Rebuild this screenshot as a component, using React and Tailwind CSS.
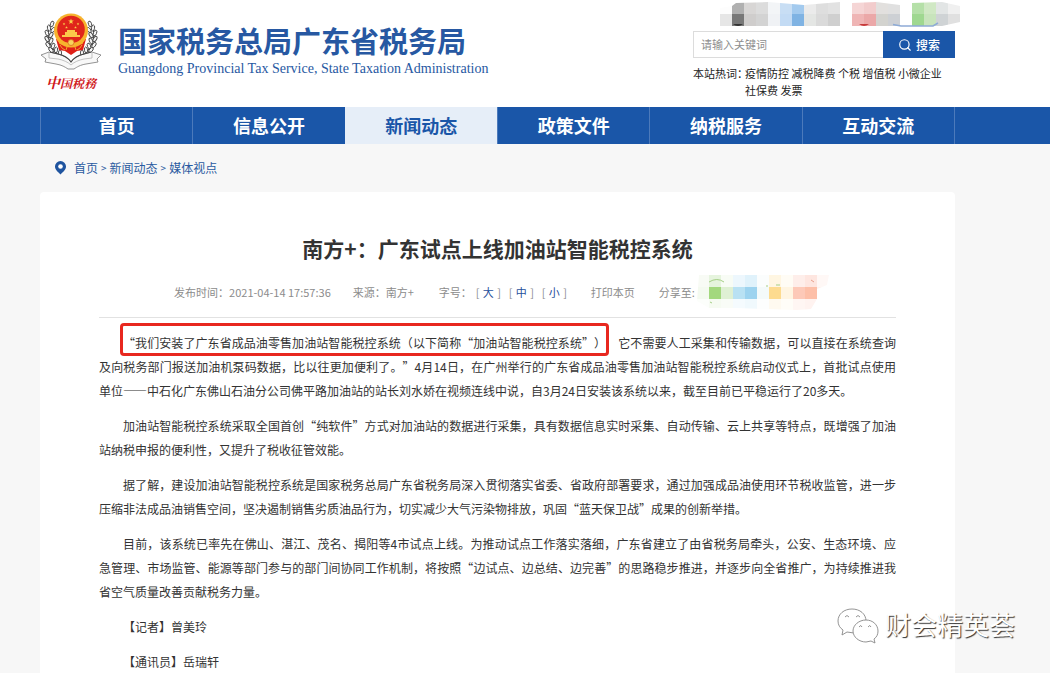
import React, { useState } from 'react';
import { Search } from 'lucide-react';

const navItems = [
  { id: 'home', label: '首页' },
  { id: 'open', label: '信息公开' },
  { id: 'news', label: '新闻动态' },
  { id: 'policy', label: '政策文件' },
  { id: 'service', label: '纳税服务' },
  { id: 'interact', label: '互动交流' }
];

const hotWords = ['疫情防控', '减税降费', '个税', '增值税', '小微企业', '社保费', '发票'];

const fontSizes = ['大', '中', '小'];

const paragraphs = [
  '加油站智能税控系统采取全国首创“纯软件”方式对加油站的数据进行采集，具有数据信息实时采集、自动传输、云上共享等特点，既增强了加油站纳税申报的便利性，又提升了税收征管效能。',
  '据了解，建设加油站智能税控系统是国家税务总局广东省税务局深入贯彻落实省委、省政府部署要求，通过加强成品油使用环节税收监管，进一步压缩非法成品油销售空间，坚决遏制销售劣质油品行为，切实减少大气污染物排放，巩固“蓝天保卫战”成果的创新举措。',
  '目前，该系统已率先在佛山、湛江、茂名、揭阳等4市试点上线。为推动试点工作落实落细，广东省建立了由省税务局牵头，公安、生态环境、应急管理、市场监管、能源等部门参与的部门间协同工作机制，将按照“边试点、边总结、边完善”的思路稳步推进，并逐步向全省推广，为持续推进我省空气质量改善贡献税务力量。',
  '【记者】曾美玲',
  '【通讯员】岳瑞轩'
];

const toolMosaic = [
  ['#fdfdfd', '#b0b0b0', '#d8d6d5', '#dcdcdc', '#f3f5f7', '#c8def4', '#a3caee', '#ebebeb', '#dedede', '#e2e2e2', '#ffffff', '#f5d5d5', '#f2cccc', '#e2e0de', '#e0e0e0', '#ffffff', '#b5e0a8', '#d0e8c4', '#e2e5e5', '#f0f0f0'],
  ['#e6e6e6', '#787878', '#cfcdcc', '#d3d3d3', '#f0f2f5', '#c3dbf4', '#7fb3e3', '#e4e6e4', '#dadada', '#cfcfcf', '#ffffff', '#efb5b5', '#eba8a8', '#d3d3cf', '#cdd0d4', '#fafafa', '#9fd890', '#c8e4bc', '#cfd3d5', '#e0e0e0']
];

const shareMosaic = [
  ['#f8fbf5', '#e6f4de', '#f8fcf5', '#edf7fd', '#e0f2fb', '#fbfdfd', '#fff6e2', '#fffcf5', '#feeeea', '#fee6e0', '#fff8f6'],
  ['#f4faf0', '#a3d87e', '#dff0d4', '#b9e1f3', '#9dd3ef', '#f4fafa', '#fddb8f', '#fff5e2', '#fdc9b8', '#fdbfa8', '#fef2ee'],
  ['#fcfefb', '#f6fbf2', '#f9fcf7', '#f5fbfe', '#f0f9fd', '#fdfefe', '#fffaf0', '#fffdf8', '#fff6f3', '#fff3f0', '#ffffff']
];

const Mosaic = ({ rows, className, clip, id, children }) => (
  <svg className={className} viewBox={`0 0 ${rows[0].length * 12} ${rows.length * 12}`} aria-hidden="true">
    <clipPath id={id}>
      <path d={clip} />
    </clipPath>
    <g clipPath={`url(#${id})`} shapeRendering="crispEdges">
      {rows.map((row, y) => row.map((fill, x) => (
        <rect key={`${x}-${y}`} x={x * 12} y={y * 12} width="12" height="12" fill={fill} />
      )))}
    </g>
    {children}
  </svg>
);

const Star = ({ x, y, r }) => (
  <path
    transform={`translate(${x} ${y}) scale(${r})`}
    d="M0-1 .24-.32.95-.31.38.12.59.81 0 .4-.59.81-.38.12-.95-.31-.24-.32Z"
    fill="#fbd34a"
  />
);

// x, y, tilt of every grain on the left ear
const wheat = [
  [12, 12, 20], [9, 16, -10], [13, 18, 35], [7, 21, -20], [11, 23, 30], [7, 27, -30], [11, 29, 25],
  [8, 33, -35], [13, 34, 20], [11, 38, -40], [16, 38, 10], [15, 42, -50], [20, 41, 0], [20, 45, -60]
];

const Emblem = () => (
  <svg className="block h-[60px] w-[62px]" viewBox="0 0 62 60" aria-hidden="true">
    {/* wheat ears, drawn once and mirrored */}
    {[0, 1].map((side) => (
      <g key={side} transform={side ? 'translate(62 0) scale(-1 1)' : undefined}>
        <path d="M12 11C5 20 7 36 24 47" fill="none" stroke="#333" strokeWidth="1" />
        {wheat.map(([x, y, tilt]) => (
          <ellipse
            key={y * 100 + x}
            cx={x}
            cy={y}
            rx="1.6"
            ry="3"
            transform={`rotate(${tilt} ${x} ${y})`}
            fill="#f4f4f4"
            stroke="#444"
            strokeWidth=".9"
          />
        ))}
      </g>
    ))}
    <path d="M16 27h30l-3 11-6 1-6 4-6-4-6-1Z" fill="#df2018" />
    <circle cx="31" cy="18.5" r="17" fill="#f7b32e" />
    <circle cx="31" cy="17.5" r="13.8" fill="#e0251b" />
    <Star x={31} y={9.5} r={3} />
    <Star x={24} y={12} r={1.4} />
    <Star x={26.500} y={15.5} r={1.4} />
    <Star x={35.500} y={15.5} r={1.4} />
    <Star x={38} y={12} r={1.4} />
    <path d="M25 23v-3h2v-2h8v2h2v3h3v2H22v-2Z" fill="#fbc94a" />
    <path d="M18 28c8 4 18 4 26 0l-1.500 4c-6 1-8 3-11.500 3s-5.500-2-11.500-3Z" fill="#f7b32e" />
    <circle cx="31" cy="30.500" r="3" fill="#f8d45e" stroke="#d8641c" strokeWidth=".7" />
    <path d="M20 33q2 4 5 5M42 33q-2 4-5 5M27 35l-1 3M35 35l1 3" fill="none" stroke="#f4b62c" strokeWidth=".9" />
    {/* ribbon */}
    <path d="M1 43 9 40l9 2q9 2 13 8 4-6 13-8l8-2 9 3-4 4 1 3-12 2c-6 1-9 3-12 5h-6c-3-2-6-4-12-5L5 50l1-3Z" fill="#f8f8f8" stroke="#888" strokeWidth=".9" />
    <path d="M9 40v6l9 1c5 1 10 3 13 6 3-3 8-5 13-6l8-1v-6" fill="none" stroke="#aaa" strokeWidth=".7" />
    <path d="M10 40l8 2q9 2 13 8 4-6 13-8l7-2" fill="none" stroke="#444" strokeWidth="1.200" />
  </svg>
);

const Header = () => {
  const [keyword, setKeyword] = useState('');

  return (
    <header className="bg-white">
      <div className="ml-10 mr-[95px] flex h-[107px] items-start justify-between">
        <a href="#home" className="flex pt-3">
          <div className="w-[62px]">
            <Emblem />
            <p className="pl-1.5 font-['Noto_Serif_CJK_SC','Noto_Sans_CJK_SC',serif] text-xs leading-[18px] font-bold text-[#d0181b] italic">
              <span className="text-sm">中</span>国税務
            </p>
          </div>
          <div className="pt-[7px] pl-4 text-[#2758a2]">
            <h1 className="text-[29px] leading-[42px] font-bold">国家税务总局广东省税务局</h1>
            <p className="font-['Liberation_Serif',serif] text-sm leading-[15px]">
              Guangdong Provincial Tax Service, State Taxation Administration
            </p>
          </div>
        </a>

        <div className="w-[262px] text-[11px]">
          <div className="flex h-[31px] justify-end pt-0.5">
            <Mosaic
              id="tool-clip"
              rows={toolMosaic}
              className="-mr-[5px] h-6 w-60 shrink-0 overflow-visible"
              clip="M0 6 12 4 16 1 48 0 84 3 120 0V24H0ZM132 1 156 0 180 3V24H132ZM192 1 222 0 240 4V20L222 24H192Z"
            >
              <path d="M13 22q5 4 10 0Z" fill="#333" />
              <path d="M139 22q5 4 10 0Z" fill="#c73b3b" />
              <path d="M173 22.500l8 1.500h32l5-3" fill="none" stroke="#8eabd6" strokeWidth="1.500" />
            </Mosaic>
          </div>
          <form className="flex h-[27px]" onSubmit={(e) => e.preventDefault()}>
            <input
              type="text"
              aria-label="请输入关键词"
              placeholder="请输入关键词"
              value={keyword}
              onChange={(e) => setKeyword(e.target.value)}
              className="min-w-0 flex-1 border border-r-0 border-[#dcdcdc] bg-white px-[7px] outline-none placeholder:text-[#8e8e8e]"
            />
            <button type="submit" className="flex w-[72px] items-center justify-center gap-1 bg-[#1a56a8] text-xs text-white">
              <Search className="h-3.5 w-3.5" strokeWidth={2} />
              <span className="font-medium">搜索</span>
            </button>
          </form>
          <div className="flex pt-[7px] leading-[17px] text-[#222]">
            <span className="w-[52px] shrink-0 whitespace-nowrap">本站热词：</span>
            <p className="w-[205px]">
              {hotWords.map((word) => (
                <React.Fragment key={word}>
                  <a href="#search" className="whitespace-nowrap">{word}</a>{' '}
                </React.Fragment>
              ))}
            </p>
          </div>
        </div>
      </div>
    </header>
  );
};

const NavBar = () => (
  <nav className="bg-[#1a56a8]">
    <div className="ml-10 mr-[95px] grid h-[37px] grid-cols-6 border-r border-[#4c7abb]">
      {navItems.map((item) => (
        <a
          key={item.id}
          href={`#${item.id}`}
          className={`flex items-center justify-center border-l pb-0.5 text-lg leading-none font-bold ${item.id === 'news'
            ? 'border-[#e6eef8] bg-[#e6eef8] text-[#1a56a8]'
            : 'border-[#4c7abb] text-white'}`}
        >
          {item.label}
        </a>
      ))}
    </div>
  </nav>
);

const Breadcrumb = () => (
  <div className="ml-10 mr-[95px] flex h-12 items-center pl-[15px] text-xs text-[#2a5aa0]">
    <svg className="mr-2 h-3.5 w-[11px]" viewBox="0 0 11 14" aria-hidden="true">
      <path d="M5.500 0A5.500 5.500 0 0 0 0 5.600C0 9 3 11 5.500 13.500 8 11 11 9 11 5.600A5.500 5.500 0 0 0 5.500 0Z" fill="#1f549f" />
      <circle cx="5.500" cy="5.500" r="2.300" fill="#fff" />
    </svg>
    <a href="#home">首页</a>
    <span className="px-[3px] text-[10px]">&gt;</span>
    <a href="#news">新闻动态</a>
    <span className="px-[3px] text-[10px]">&gt;</span>
    <a href="#media">媒体视点</a>
  </div>
);

const ArticleMeta = () => (
  <div className="flex h-[50px] items-center justify-center border-b border-[#e2e2e2] text-[11px] whitespace-nowrap text-[#8c8c8c]">
    <span className="mr-[22px]">发布时间：2021-04-14 17:57:36</span>
    <span className="mr-[25px]">来源：南方+</span>
    <span className="mr-1">字号：</span>
    {fontSizes.map((size) => (
      <span key={size} className="flex w-[33px] items-center justify-between pr-2">
        [<button type="button" className="text-[#1f4f9c]">{size}</button>]
      </span>
    ))}
    <button type="button" className="mr-6 ml-4">打印本页</button>
    <span>分享至:</span>
    <Mosaic
      id="share-clip"
      rows={shareMosaic}
      className="-mr-2 ml-0.5 h-9 w-[132px]"
      clip="M2 0H132L130 10 120 14V24L114 34 100 35 40 33 12 33 0 26Z"
    >
      <path d="M12 7q8-5 15 0M13 27l2 1M69 11h2M79 10h4" fill="none" stroke="#a5cf86" strokeWidth="1" />
      <path d="M114 5l3 2" fill="none" stroke="#e8a08c" strokeWidth="1" />
    </Mosaic>
  </div>
);

const Watermark = () => (
  <div className="pointer-events-none absolute right-[35px] bottom-[30px] flex items-center gap-1.5">
    <svg className="h-9 w-[42px]" viewBox="0 0 42 36" fill="#fff" stroke="#888" strokeWidth=".9" aria-hidden="true">
      <path d="M15 1C7 1 1 6 1 13c0 4 2 7 5 9l-1 5 5-3 7 1c7 0 12-5 12-12S23 1 15 1Z" />
      <path d="M8 9q2-3 4 0M19 9q2-3 4 0" fill="none" />
      <path d="M29 12c-7 0-13 5-13 11s6 11 13 11l5-1 4 2-1-4c3-2 4-5 4-8 0-6-5-11-12-11Z" />
      <path d="M22 19q2-3 3 0M31 19q2-3 3 0" fill="none" />
    </svg>
    <span className="pb-1 text-[26px] leading-8 text-white [text-shadow:1px_1px_1px_#333]">财会精英荟</span>
  </div>
);

const App = () => (
  <div
    lang="zh-CN"
    className="relative flex min-h-screen flex-col bg-[#f7f7f7] font-['Noto_Sans_CJK_SC',sans-serif] [text-spacing-trim:space-all]"
  >
    <Header />
    <NavBar />
    <Breadcrumb />
    <main className="ml-10 mr-[95px] flex-1 rounded-t bg-white px-[59px] pt-[38px]">
      <h2 className="pb-0.5 text-center text-[21px] leading-9 font-bold text-[#333]">南方+：广东试点上线加油站智能税控系统</h2>
      <ArticleMeta />
      <article className="flex flex-col gap-[11px] pt-[13px] text-justify indent-6 text-xs leading-6 text-[#333]">
        <p>
          <span className="-mx-[3px] rounded-sm border-[3px] border-[#e8281f] pt-2 pb-0.5">
            “我们安装了广东省成品油零售加油站智能税控系统（以下简称“加油站智能税控系统”）
          </span>
          {'\u3000'}它不需要人工采集和传输数据，可以直接在系统查询及向税务部门报送加油机泵码数据，比以往更加便利了。”4月14日，在广州举行的广东省成品油零售加油站智能税控系统启动仪式上，首批试点使用单位——中石化广东佛山石油分公司佛平路加油站的站长刘水娇在视频连线中说，自3月24日安装该系统以来，截至目前已平稳运行了20多天。
        </p>
        {paragraphs.map((text) => (
          <p key={text}>{text}</p>
        ))}
      </article>
    </main>
    <Watermark />
  </div>
);

export default App;
